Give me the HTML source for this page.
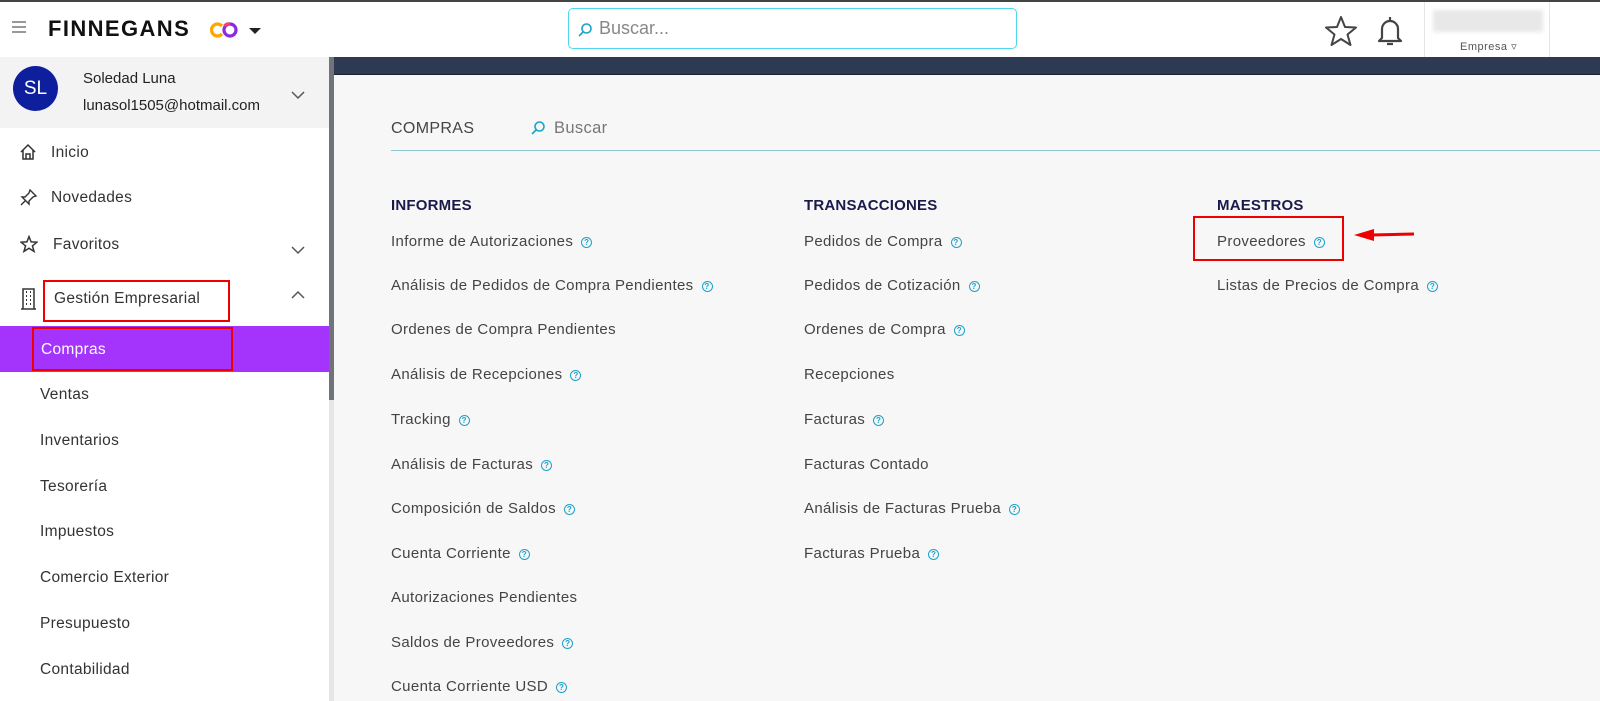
<!DOCTYPE html>
<html><head><meta charset="utf-8"><style>
*{margin:0;padding:0;box-sizing:border-box}
body{width:1600px;height:701px;overflow:hidden;background:#fff;font-family:"Liberation Sans",sans-serif;color:#333;position:relative}
.a{position:absolute;white-space:nowrap}
.top{left:0;top:0;width:1600px;height:57px;background:#fff;border-top:2px solid #444}
.side{left:0;top:57px;width:329px;height:644px;background:#fff}
.si{position:absolute;left:40px;font-size:15.5px;color:#333;letter-spacing:.3px}
.main{left:334px;top:57px;width:1266px;height:644px;background:#f7f7f7}
.li{position:absolute;font-size:15px;color:#444;letter-spacing:.35px}
.h{position:absolute;font-size:15px;color:#1a1a4a;font-weight:bold;letter-spacing:.2px}
.q{display:inline-block;width:11px;height:11px;border:1.3px solid #1aa3c9;border-radius:50%;font-size:8px;line-height:9px;text-align:center;color:#1aa3c9;margin-left:8px;vertical-align:1px;font-weight:bold}
</style></head><body>
<div class="a top">
 <div class="a" style="left:12px;top:19px;width:14px;height:2px;background:#999;box-shadow:0 5px 0 #999,0 10px 0 #999"></div>
 <div class="a" style="left:48px;top:14px;font-size:22px;font-weight:bold;color:#111;letter-spacing:1.4px">FINNEGANS</div>
 <svg class="a" style="left:208px;top:19px" width="32" height="18" viewBox="0 0 32 18"><path d="M14 5 A6 6 0 1 0 14 13" fill="none" stroke="#ffa500" stroke-width="3.2"/><circle cx="22" cy="9" r="6" fill="none" stroke="#8a2be2" stroke-width="3.2"/><path d="M16.5 5 A6 6 0 0 1 22 3" stroke="#ff3b6b" stroke-width="3.2" fill="none"/></svg>
 <div class="a" style="left:249px;top:26px;border-left:6px solid transparent;border-right:6px solid transparent;border-top:6px solid #222"></div>
 <div class="a" style="left:568px;top:6px;width:449px;height:41px;border:1.5px solid #4dd9f0;border-radius:5px"></div>
 <svg class="a" style="left:577px;top:20px" width="16" height="16" viewBox="0 0 16 16"><circle cx="9.5" cy="6.5" r="4.5" fill="none" stroke="#1aa3c9" stroke-width="1.6"/><path d="M6 10 L2 14" stroke="#1aa3c9" stroke-width="1.6"/></svg>
 <div class="a" style="left:599px;top:16px;font-size:18px;color:#888">Buscar...</div>
 <svg class="a" style="left:1324px;top:13px" width="34" height="32" viewBox="0 0 34 32"><path d="M17 2 L21 12 L32 12.5 L23.5 19.5 L26.5 30 L17 24 L7.5 30 L10.5 19.5 L2 12.5 L13 12 Z" fill="none" stroke="#444" stroke-width="2" stroke-linejoin="round"/></svg>
 <svg class="a" style="left:1376px;top:12px" width="28" height="34" viewBox="0 0 28 34"><path d="M14 3 V6 M6 24 V15 A8 8 0 0 1 22 15 V24 L25 27 H3 Z M11 30 H17" fill="none" stroke="#444" stroke-width="2.2" stroke-linejoin="round"/></svg>
 <div class="a" style="left:1424px;top:0;width:1px;height:57px;background:#e5e5e5"></div>
 <div class="a" style="left:1549px;top:0;width:1px;height:57px;background:#e5e5e5"></div>
 <div class="a" style="left:1433px;top:8px;width:110px;height:22px;background:#e8e8e8;filter:blur(2px)"></div>
 <div class="a" style="left:1460px;top:38px;font-size:11px;color:#555;letter-spacing:.5px">Empresa ▿</div>
</div>
<div class="a side">
 <div class="a" style="left:0;top:0;width:329px;height:71px;background:#f3f3f3"></div>
 <div class="a" style="left:13px;top:9px;width:45px;height:45px;border-radius:50%;background:#0d1f9c;color:#fff;font-size:19px;line-height:45px;text-align:center">SL</div>
 <div class="a" style="left:83px;top:13px;font-size:15px;color:#222">Soledad Luna</div>
 <div class="a" style="left:83px;top:40px;font-size:15px;color:#222">lunasol1505@hotmail.com</div>
 <svg class="a" style="left:290px;top:33px" width="16" height="10"><path d="M2 2 L8 8 L14 2" fill="none" stroke="#555" stroke-width="1.5"/></svg>
 <svg class="a" style="left:19px;top:86px" width="18" height="18" viewBox="0 0 18 18"><path d="M2 9 L9 2 L16 9 M4 7 V16 H14 V7 M7 16 V11 H11 V16" fill="none" stroke="#333" stroke-width="1.5"/></svg>
 <div class="si" style="left:51px;top:87px">Inicio</div>
 <svg class="a" style="left:20px;top:131px" width="18" height="18" viewBox="0 0 18 18"><path d="M10 2 L16 8 L13 9 L9 13 L9 16 L2 9 L5 9 L9 5 Z M6 12 L1 17" fill="none" stroke="#333" stroke-width="1.4"/></svg>
 <div class="si" style="left:51px;top:132px">Novedades</div>
 <svg class="a" style="left:20px;top:178px" width="18" height="18" viewBox="0 0 34 32"><path d="M17 2 L21 12 L32 12.5 L23.5 19.5 L26.5 30 L17 24 L7.5 30 L10.5 19.5 L2 12.5 L13 12 Z" fill="none" stroke="#333" stroke-width="2.8"/></svg>
 <div class="si" style="left:53px;top:179px">Favoritos</div>
 <svg class="a" style="left:290px;top:188px" width="16" height="10"><path d="M2 2 L8 8 L14 2" fill="none" stroke="#555" stroke-width="1.5"/></svg>
 <svg class="a" style="left:21px;top:231px" width="15" height="22" viewBox="0 0 15 22"><path d="M2 1 H13 V21 H2 Z M0 21 H15" fill="none" stroke="#333" stroke-width="1.5"/><path d="M5 4h1M9 4h1M5 8h1M9 8h1M5 12h1M9 12h1M5 16h1M9 16h1" stroke="#333" stroke-width="2"/></svg>
 <div class="a" style="left:43px;top:223px;width:187px;height:42px;border:2.5px solid #e00"></div>
 <div class="si" style="left:54px;top:233px">Gestión Empresarial</div>
 <svg class="a" style="left:290px;top:233px" width="16" height="10"><path d="M2 8 L8 2 L14 8" fill="none" stroke="#555" stroke-width="1.5"/></svg>
 <div class="a" style="left:0;top:269px;width:329px;height:46px;background:#a434fb"></div>
 <div class="a" style="left:32px;top:270px;width:201px;height:44px;border:2.5px solid #e00"></div>
 <div class="si" style="left:41px;top:284px;color:#fff">Compras</div>
 <div class="si" style="top:329px">Ventas</div>
 <div class="si" style="top:375px">Inventarios</div>
 <div class="si" style="top:421px">Tesorería</div>
 <div class="si" style="top:466px">Impuestos</div>
 <div class="si" style="top:512px">Comercio Exterior</div>
 <div class="si" style="top:558px">Presupuesto</div>
 <div class="si" style="top:604px">Contabilidad</div>
</div>
<div class="a" style="left:329px;top:57px;width:5px;height:644px;background:#e6e6e6"></div>
<div class="a" style="left:329px;top:57px;width:5px;height:343px;background:#70747a"></div>
<div class="a main">
 <div class="a" style="left:0;top:0;width:1266px;height:18px;background:#2e3a52;border-bottom:1px solid #1a2236"></div>
 <div class="li" style="left:57px;top:63px;font-size:16px;color:#444">COMPRAS</div>
 <svg class="a" style="left:196px;top:63px" width="16" height="16" viewBox="0 0 16 16"><circle cx="9.5" cy="6.5" r="4.5" fill="none" stroke="#1aa3c9" stroke-width="1.6"/><path d="M6 10 L2 14" stroke="#1aa3c9" stroke-width="1.6"/></svg>
 <div class="li" style="left:220px;top:62px;font-size:16.5px;color:#777">Buscar</div>
 <div class="a" style="left:57px;top:93px;width:1209px;height:1px;background:#8cc6cf"></div>
 <div class="h" style="left:57px;top:140px">INFORMES</div>
 <div class="li" style="left:57px;top:176px">Informe de Autorizaciones<span class="q">?</span></div>
 <div class="li" style="left:57px;top:220px">Análisis de Pedidos de Compra Pendientes<span class="q">?</span></div>
 <div class="li" style="left:57px;top:264px">Ordenes de Compra Pendientes</div>
 <div class="li" style="left:57px;top:309px">Análisis de Recepciones<span class="q">?</span></div>
 <div class="li" style="left:57px;top:354px">Tracking<span class="q">?</span></div>
 <div class="li" style="left:57px;top:399px">Análisis de Facturas<span class="q">?</span></div>
 <div class="li" style="left:57px;top:443px">Composición de Saldos<span class="q">?</span></div>
 <div class="li" style="left:57px;top:488px">Cuenta Corriente<span class="q">?</span></div>
 <div class="li" style="left:57px;top:532px">Autorizaciones Pendientes</div>
 <div class="li" style="left:57px;top:577px">Saldos de Proveedores<span class="q">?</span></div>
 <div class="li" style="left:57px;top:621px">Cuenta Corriente USD<span class="q">?</span></div>
 <div class="h" style="left:470px;top:140px">TRANSACCIONES</div>
 <div class="li" style="left:470px;top:176px">Pedidos de Compra<span class="q">?</span></div>
 <div class="li" style="left:470px;top:220px">Pedidos de Cotización<span class="q">?</span></div>
 <div class="li" style="left:470px;top:264px">Ordenes de Compra<span class="q">?</span></div>
 <div class="li" style="left:470px;top:309px">Recepciones</div>
 <div class="li" style="left:470px;top:354px">Facturas<span class="q">?</span></div>
 <div class="li" style="left:470px;top:399px">Facturas Contado</div>
 <div class="li" style="left:470px;top:443px">Análisis de Facturas Prueba<span class="q">?</span></div>
 <div class="li" style="left:470px;top:488px">Facturas Prueba<span class="q">?</span></div>
 <div class="h" style="left:883px;top:140px">MAESTROS</div>
 <div class="a" style="left:859px;top:159px;width:151px;height:45px;border:2.5px solid #e00"></div>
 <div class="li" style="left:883px;top:176px">Proveedores<span class="q">?</span></div>
 <div class="li" style="left:883px;top:220px">Listas de Precios de Compra<span class="q">?</span></div>
 <svg class="a" style="left:1018px;top:170px" width="66" height="16"><path d="M20 8 L62 7" stroke="#e00" stroke-width="3"/><path d="M2 8 L22 2 L22 14 Z" fill="#e00"/></svg>
</div>
</body></html>
